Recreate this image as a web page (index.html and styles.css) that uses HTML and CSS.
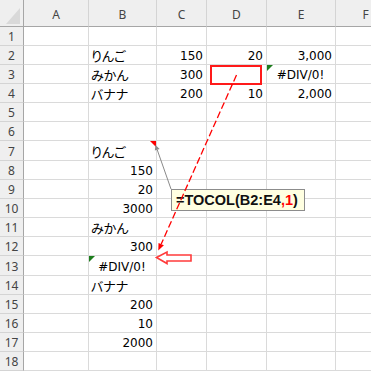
FILE: index.html
```html
<!DOCTYPE html>
<html lang="ja">
<head>
<meta charset="utf-8">
<link rel="stylesheet" href="styles.css">
</head>
<body>
<div class="wrap">
  <div class="sheet">
    <div class="corner"><span class="corner-tri"></span></div>
    <div class="ch">A</div><div class="ch">B</div><div class="ch">C</div><div class="ch">D</div><div class="ch">E</div><div class="ch last">F</div>

    <div class="rh">1</div><div class="c"></div><div class="c"></div><div class="c"></div><div class="c"></div><div class="c"></div><div class="c"></div>
    <div class="rh">2</div><div class="c"></div><div class="c jp">りんご</div><div class="c num">150</div><div class="c num">20</div><div class="c num">3,000</div><div class="c"></div>
    <div class="rh">3</div><div class="c"></div><div class="c jp">みかん</div><div class="c num">300</div><div class="c"><span class="redbox"></span></div><div class="c err">#DIV/0!</div><div class="c"></div>
    <div class="rh">4</div><div class="c"></div><div class="c jp">バナナ</div><div class="c num">200</div><div class="c num">10</div><div class="c num">2,000</div><div class="c"></div>
    <div class="rh">5</div><div class="c"></div><div class="c"></div><div class="c"></div><div class="c"></div><div class="c"></div><div class="c"></div>
    <div class="rh">6</div><div class="c"></div><div class="c"></div><div class="c"></div><div class="c"></div><div class="c"></div><div class="c"></div>
    <div class="rh">7</div><div class="c"></div><div class="c jp note">りんご</div><div class="c"></div><div class="c"></div><div class="c"></div><div class="c"></div>
    <div class="rh">8</div><div class="c"></div><div class="c num">150</div><div class="c"></div><div class="c"></div><div class="c"></div><div class="c"></div>
    <div class="rh">9</div><div class="c"></div><div class="c num">20</div><div class="c"></div><div class="c"></div><div class="c"></div><div class="c"></div>
    <div class="rh">10</div><div class="c"></div><div class="c num">3000</div><div class="c"></div><div class="c"></div><div class="c"></div><div class="c"></div>
    <div class="rh">11</div><div class="c"></div><div class="c jp">みかん</div><div class="c"></div><div class="c"></div><div class="c"></div><div class="c"></div>
    <div class="rh">12</div><div class="c"></div><div class="c num">300</div><div class="c"></div><div class="c"></div><div class="c"></div><div class="c"></div>
    <div class="rh">13</div><div class="c"></div><div class="c err">#DIV/0!</div><div class="c"></div><div class="c"></div><div class="c"></div><div class="c"></div>
    <div class="rh">14</div><div class="c"></div><div class="c jp">バナナ</div><div class="c"></div><div class="c"></div><div class="c"></div><div class="c"></div>
    <div class="rh">15</div><div class="c"></div><div class="c num">200</div><div class="c"></div><div class="c"></div><div class="c"></div><div class="c"></div>
    <div class="rh">16</div><div class="c"></div><div class="c num">10</div><div class="c"></div><div class="c"></div><div class="c"></div><div class="c"></div>
    <div class="rh">17</div><div class="c"></div><div class="c num">2000</div><div class="c"></div><div class="c"></div><div class="c"></div><div class="c"></div>
    <div class="rh">18</div><div class="c"></div><div class="c"></div><div class="c"></div><div class="c"></div><div class="c"></div><div class="c"></div>
  </div>

  <div class="comment">=TOCOL(B2:E4<span class="red">,1</span>)</div>

  <svg class="overlay" width="371" height="372" viewBox="0 0 371 372">
    <line x1="171" y1="189" x2="157.2" y2="149.7" stroke="#8a8a8a" stroke-width="1"/>
    <polygon points="155.5,145 159.6,148.9 154.8,150.5" fill="#8a8a8a"/>
    <line x1="236.5" y1="75" x2="161.2" y2="244.1" stroke="#ff0000" stroke-width="1.3" stroke-dasharray="7 3"/>
    <polygon points="158.3,250.5 163.9,245.3 158.5,242.9" fill="#ff0000"/>
    <polygon points="156.5,257.5 167,252 167,255 191,255 191,261 167,261 167,263.5" fill="#ffffff" stroke="#ff3b3b" stroke-width="1.6" stroke-linejoin="miter"/>
  </svg>
</div>
</body>
</html>
```

FILE: styles.css
```css
html, body {
  margin: 0;
  padding: 0;
  background: #ffffff;
}

.wrap {
  position: relative;
  width: 371px;
  height: 372px;
  overflow: hidden;
}

.sheet {
  display: grid;
  grid-template-columns: 24px 65px 68px 50px 60px 69px 60px;
  grid-template-rows: 27px repeat(6, 19px) 20px repeat(5, 19px) 20px repeat(5, 19px);
  font-family: "DejaVu Sans", "Noto Sans CJK JP", sans-serif;
  font-size: 12px;
  color: #000;
}

.corner {
  position: relative;
  background: #efefef;
  border-right: 1px solid #a6a6a6;
  border-bottom: 1px solid #a6a6a6;
  box-sizing: border-box;
}

.corner-tri {
  position: absolute;
  right: 3px;
  bottom: 2px;
  width: 0;
  height: 0;
  border-bottom: 16px solid #d9d9d9;
  border-left: 14px solid transparent;
}

.ch {
  background: #efefef;
  border-right: 1px solid #d4d4d4;
  border-bottom: 1px solid #a6a6a6;
  box-sizing: border-box;
  display: flex;
  align-items: center;
  justify-content: center;
  font-family: "Noto Sans", sans-serif;
  font-size: 12px;
  color: #444;
  padding-top: 2px;
}

.rh {
  background: #efefef;
  border-right: 1px solid #a6a6a6;
  border-bottom: 1px solid #d4d4d4;
  box-sizing: border-box;
  display: flex;
  align-items: center;
  justify-content: center;
  font-family: "Noto Sans", sans-serif;
  font-size: 12px;
  color: #444;
  padding-top: 1px;
}

.c {
  position: relative;
  border-right: 1px solid #dadada;
  border-bottom: 1px solid #dadada;
  box-sizing: border-box;
  display: flex;
  align-items: flex-end;
  padding: 0 3px 1px 2px;
  line-height: 14px;
  white-space: nowrap;
}

.num {
  justify-content: flex-end;
}

.err {
  justify-content: center;
}

.err::before {
  content: "";
  position: absolute;
  top: 0;
  left: 0;
  width: 0;
  height: 0;
  border-top: 6px solid #1d7d1d;
  border-right: 6px solid transparent;
}

.jp {
  font-family: "Noto Sans CJK JP", sans-serif;
  font-size: 13px;
  font-feature-settings: "palt";
}

.note::after {
  content: "";
  position: absolute;
  top: 0;
  right: 0;
  width: 0;
  height: 0;
  border-top: 6px solid #ff0000;
  border-left: 6px solid transparent;
}

.redbox {
  position: absolute;
  left: 3px;
  top: 0;
  width: 52px;
  height: 20px;
  border: 2px solid #ff1a1a;
  box-sizing: border-box;
}

.comment {
  position: absolute;
  left: 171px;
  top: 189px;
  width: 134px;
  height: 22px;
  box-sizing: border-box;
  background: #ffffe1;
  border: 1px solid #8c8c8c;
  font-family: "Liberation Sans", sans-serif;
  font-weight: bold;
  font-size: 14.5px;
  line-height: 20px;
  padding-left: 4px;
  color: #111;
  white-space: nowrap;
}

.red {
  color: #ff0000;
}

.overlay {
  position: absolute;
  left: 0;
  top: 0;
  pointer-events: none;
}
```
